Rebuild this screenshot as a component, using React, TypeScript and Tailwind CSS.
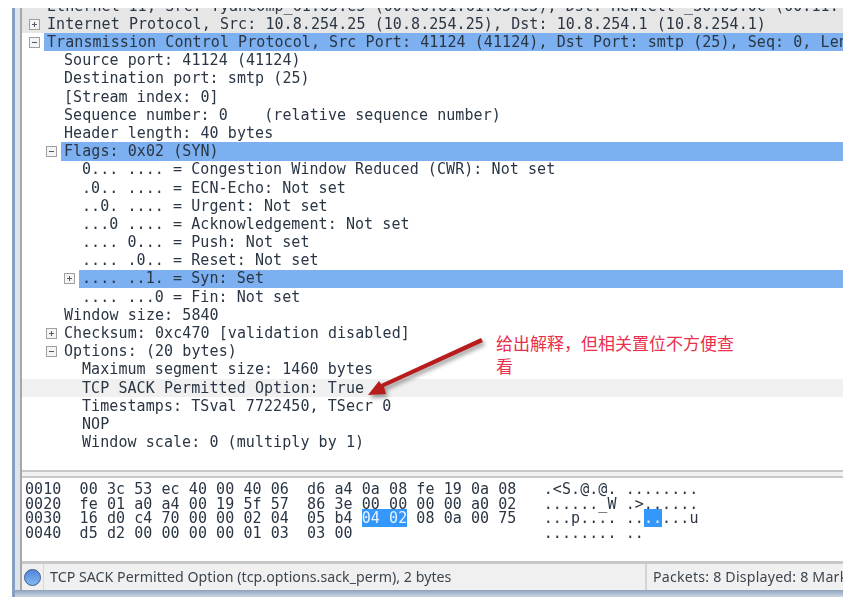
import React from "react";

const mono = "font-['DejaVu_Sans_Mono',monospace]";

type Row = { t: string; l: number; e?: "+" | "-"; bg?: "blue" | "grey" | "head" };

const rows: Row[] = [
  { t: "Internet Protocol, Src: 10.8.254.25 (10.8.254.25), Dst: 10.8.254.1 (10.8.254.1)", l: 0, e: "+", bg: "head" },
  { t: "Transmission Control Protocol, Src Port: 41124 (41124), Dst Port: smtp (25), Seq: 0, Len: 0", l: 0, e: "-", bg: "blue" },
  { t: "Source port: 41124 (41124)", l: 1 },
  { t: "Destination port: smtp (25)", l: 1 },
  { t: "[Stream index: 0]", l: 1 },
  { t: "Sequence number: 0    (relative sequence number)", l: 1 },
  { t: "Header length: 40 bytes", l: 1 },
  { t: "Flags: 0x02 (SYN)", l: 1, e: "-", bg: "blue" },
  { t: "0... .... = Congestion Window Reduced (CWR): Not set", l: 2 },
  { t: ".0.. .... = ECN-Echo: Not set", l: 2 },
  { t: "..0. .... = Urgent: Not set", l: 2 },
  { t: "...0 .... = Acknowledgement: Not set", l: 2 },
  { t: ".... 0... = Push: Not set", l: 2 },
  { t: ".... .0.. = Reset: Not set", l: 2 },
  { t: ".... ..1. = Syn: Set", l: 2, e: "+", bg: "blue" },
  { t: ".... ...0 = Fin: Not set", l: 2 },
  { t: "Window size: 5840", l: 1 },
  { t: "Checksum: 0xc470 [validation disabled]", l: 1, e: "+" },
  { t: "Options: (20 bytes)", l: 1, e: "-" },
  { t: "Maximum segment size: 1460 bytes", l: 2 },
  { t: "TCP SACK Permitted Option: True", l: 2, bg: "grey" },
  { t: "Timestamps: TSval 7722450, TSecr 0", l: 2 },
  { t: "NOP", l: 2 },
  { t: "Window scale: 0 (multiply by 1)", l: 2 },
];

function Expander({ kind }: { kind: "+" | "-" }) {
  return (
    <svg width="11" height="11" viewBox="0 0 11 11" className="shrink-0">
      <rect x="0.5" y="0.5" width="10" height="10" fill="#f4f4f4" stroke="#a0a0a0" />
      <path d="M3 5.5h5" stroke="#505a66" />
      {kind === "+" && <path d="M5.5 3v5" stroke="#505a66" />}
    </svg>
  );
}

function TreeRow({ r }: { r: Row }) {
  const indent = r.l === 0 ? "pl-[7px]" : r.l === 1 ? "pl-[24px]" : "pl-[42px]";
  const outer = r.bg === "grey" ? "bg-[#f0f0f0]" : r.bg === "head" ? "bg-[#e6e6e6]" : "";
  const inner = r.bg === "blue" ? "bg-[#7cb0f0]" : "";
  return (
    <div className={`flex h-[18.2px] items-center ${outer}`}>
      <div className={`flex h-full min-w-0 flex-1 items-center ${indent}`}>
        <div className="flex w-[15px] shrink-0 items-center">{r.e && <Expander kind={r.e} />}</div>
        <div className={`flex h-full min-w-0 flex-1 items-center overflow-hidden whitespace-pre pl-[3px] ${inner}`}>
          {r.t}
        </div>
      </div>
    </div>
  );
}

function Sel({ children }: { children: React.ReactNode }) {
  return <span className="bg-[#3398fa] text-[#e8f2ff]">{children}</span>;
}

export default function App() {
  return (
    <div className="relative h-[607px] w-[862px] overflow-hidden bg-white pl-[12px] pr-[19px] pt-[8px]">
      <div className="flex h-[589px] flex-col border-l-[3px] border-[#86a0c2] bg-[#dde4ec] pl-[5px] blur-[0.35px]">
        <div className="flex min-h-0 flex-1 flex-col border-l-2 border-[#a8a8a8] bg-white">
          <div className={`h-[462px] shrink-0 overflow-hidden text-[15px] tracking-[0.07px] text-[#2a3644] ${mono}`}>
            <div className="h-[7px] overflow-hidden bg-[#e6e6e6]">
              <div className="-mt-[11px] flex h-[18.2px] items-center whitespace-pre pl-[25px]">
                Ethernet II, Src: TyanComp_61:65:e5 (00:e0:81:61:65:e5), Dst: Hewlett-_30:05:0c (00:11:
              </div>
            </div>
            {rows.map((r, i) => (
              <TreeRow key={i} r={r} />
            ))}
          </div>
          <div className="h-[8px] shrink-0 border-y-2 border-[#c8c8c8] bg-[#f2f2f2]" />
          <div className={`flex-1 whitespace-pre pl-[3px] pt-[4px] text-[15px] leading-[14.6px] tracking-[0.07px] text-[#2a3644] ${mono}`}>
            <div>0010  00 3c 53 ec 40 00 40 06  d6 a4 0a 08 fe 19 0a 08   .&lt;S.@.@. ........</div>
            <div>0020  fe 01 a0 a4 00 19 5f 57  86 3e 00 00 00 00 a0 02   ......_W .&gt;......</div>
            <div>
              0030  16 d0 c4 70 00 00 02 04  05 b4 <Sel>04 02</Sel> 08 0a 00 75   ...p.... ..<Sel>..</Sel>...u
            </div>
            <div>0040  d5 d2 00 00 00 00 01 03  03 00                     ........ ..</div>
          </div>
          <div className="flex h-[29px] shrink-0 border-t-[3px] border-[#c8c8c8] bg-[#f0f0f0] font-['Noto_Sans',sans-serif] text-[14.2px] text-[#3c4650]">
            <div className="flex w-[22px] shrink-0 items-center justify-center border-r border-[#d8d8d8]">
              <div className="h-[17px] w-[17px] rounded-full border border-[#3a5a88] bg-gradient-to-b from-[#4f86d8] to-[#86b8f4]" />
            </div>
            <div className="flex min-w-0 flex-1 items-center pl-[6px] tracking-[0.03px]">
              TCP SACK Permitted Option (tcp.options.sack_perm), 2 bytes
            </div>
            <div className="flex w-[198px] shrink-0 items-center overflow-hidden whitespace-pre border-l-2 border-[#d4d4d4] pl-[6px] tracking-[0.2px]">
              Packets: 8 Displayed: 8 Marked: 0
            </div>
          </div>
        </div>
        <div className="-ml-[5px] h-[7px] shrink-0 bg-gradient-to-b from-[#8ea2bd] to-[#cdd6e2]" />
      </div>

      <svg className="absolute left-[350px] top-[325px] overflow-visible" width="150" height="85" viewBox="350 325 150 85">
        <path
          d="M483 342 L384 387 L386 394 L368 395 L379 381 L381 384 L481 338Z"
          fill="#b81c1c"
          className="drop-shadow-[2px_3px_2px_rgba(0,0,0,0.4)]"
        />
      </svg>
      <div className="absolute left-[496px] top-[331px] w-[245px] font-['Noto_Sans_CJK_SC',sans-serif] text-[17px] leading-[23px] text-[#e9304e]">
        {"给出解释\uFF0C但相关置位不方便查看"}
      </div>
    </div>
  );
}
